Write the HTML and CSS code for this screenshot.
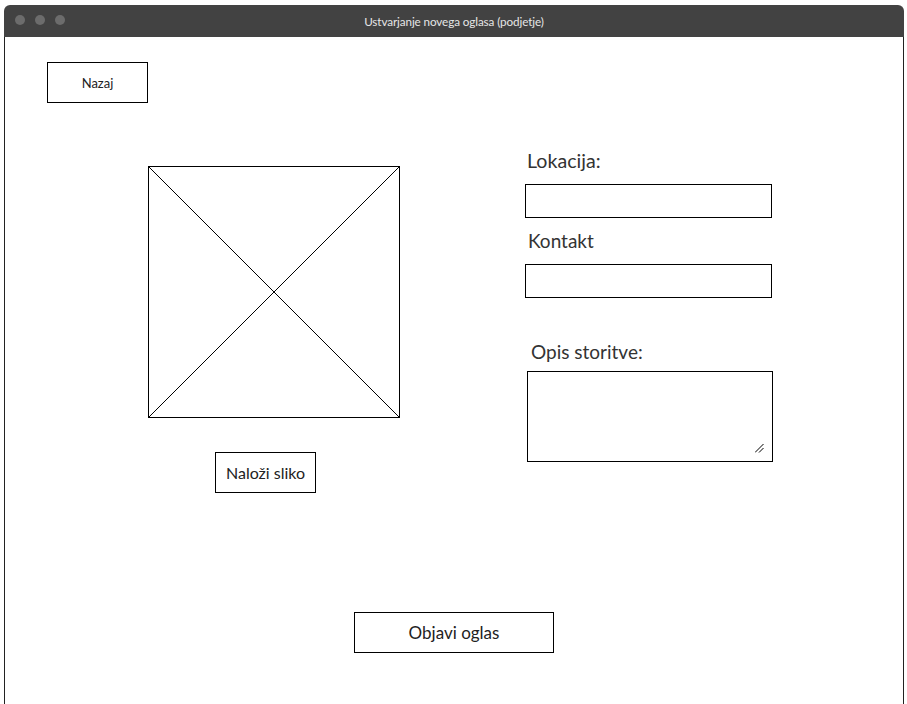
FILE: index.html
```html
<!DOCTYPE html>
<html lang="sl">
<head>
    <meta charset="UTF-8">
    <meta name="viewport" content="width=device-width, initial-scale=1.0">
    <title>Ustvarjanje novega oglasa (podjetje)</title>
    <link rel="stylesheet" href="styles.css">
</head>
<body>

<div class="window">
    <div class="titlebar">
        <div class="dots">
            <span class="dot"></span>
            <span class="dot"></span>
            <span class="dot"></span>
        </div>
        <div class="title">Ustvarjanje novega oglasa (podjetje)</div>
    </div>

    <div class="window-body">
        <button class="btn btn-back">Nazaj</button>

        <div class="main">
            <div class="media">
                <!-- image placeholder -->
                <svg class="placeholder" width="252" height="252" viewBox="0 0 252 252">
                    <rect x="0.5" y="0.5" width="251" height="251" fill="#fff" stroke="#000"/>
                    <line x1="1" y1="1" x2="251" y2="251" stroke="#000" stroke-width="1"/>
                    <line x1="251" y1="1" x2="1" y2="251" stroke="#000" stroke-width="1"/>
                </svg>
                <button class="btn btn-upload">Naloži sliko</button>
            </div>

            <div class="form">
                <label class="label label-loc">Lokacija:</label>
                <input class="field" type="text">

                <label class="label label-contact">Kontakt</label>
                <input class="field" type="text">

                <label class="label label-desc">Opis storitve:</label>
                <div class="area-wrap">
                    <textarea class="area"></textarea>
                    <svg class="grip" width="9" height="9" viewBox="0 0 9 9">
                        <line x1="0" y1="8.5" x2="8.5" y2="0" stroke="#000" stroke-width="1"/>
                        <line x1="4" y1="8.5" x2="8.5" y2="4" stroke="#000" stroke-width="1"/>
                    </svg>
                </div>
            </div>
        </div>

        <button class="btn btn-publish">Objavi oglas</button>
    </div>
</div>

</body>
</html>
```

FILE: styles.css
```css
body {
    margin: 0;
    background: #fff;
    font-family: Lato, "Open Sans", sans-serif;
    color: #222;
    overflow: hidden;
}
.window {
    width: 900px;
    margin: 5px 0 0 4px;
}
.titlebar {
    position: relative;
    height: 32px;
    background-color: #424242;
    border-radius: 6px 6px 0 0;
    display: flex;
    align-items: center;
    justify-content: center;
}
.dots {
    position: absolute;
    left: 11px;
    top: 10px;
    display: flex;
    gap: 10px;
}
.dot {
    width: 10px;
    height: 10px;
    border-radius: 50%;
    background-color: #6c6c6c;
}
.title {
    color: #e6e6e6;
    font-size: 11.7px;
    letter-spacing: -0.1px;
}
.window-body {
    height: 667px;
    box-sizing: border-box;
    border-left: 1px solid #222;
    border-right: 1px solid #222;
    padding: 25px 0 0 42px;
    display: flex;
    flex-direction: column;
    align-items: flex-start;
}
.btn {
    box-sizing: border-box;
    background: #fff;
    border: 1px solid #000;
    font-family: inherit;
    color: #222;
    padding: 0;
    cursor: pointer;
}
.btn-back {
    width: 101px;
    height: 41px;
    font-size: 13px;
}
.main {
    display: flex;
    align-items: flex-start;
    margin-top: 46px;
}
.media {
    display: flex;
    flex-direction: column;
    align-items: flex-start;
    margin: 17px 0 0 101px;
    width: 252px;
}
.placeholder {
    display: block;
}
.btn-upload {
    width: 101px;
    height: 41px;
    margin: 34px 0 0 67px;
    font-size: 16px;
}
.form {
    display: flex;
    flex-direction: column;
    align-items: flex-start;
    margin-left: 125px;
}
.label {
    font-size: 19px;
    line-height: 24px;
    color: #333;
}
.label-loc {
    padding-left: 2px;
    font-size: 19.6px;
}
.label-contact {
    padding-left: 3px;
    margin-top: 11px;
}
.label-desc {
    padding-left: 6px;
    margin-top: 42px;
}
.field {
    box-sizing: border-box;
    width: 247px;
    height: 34px;
    margin-top: 11px;
    border: 1px solid #000;
    padding: 0 6px;
    outline: none;
}
.area-wrap {
    position: relative;
    margin: 7px 0 0 2px;
}
.area {
    display: block;
    box-sizing: border-box;
    width: 246px;
    height: 91px;
    border: 1px solid #000;
    resize: none;
    outline: none;
}
.grip {
    position: absolute;
    left: 228px;
    top: 73px;
}
.btn-publish {
    align-self: center;
    width: 200px;
    height: 41px;
    margin: 119px 0 0 -42px;
    font-size: 17px;
}
```
